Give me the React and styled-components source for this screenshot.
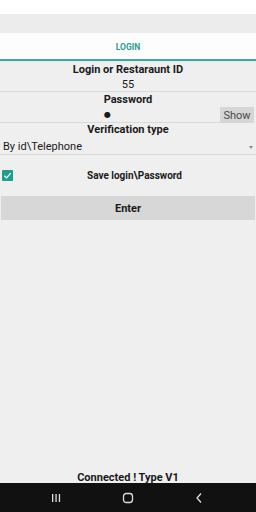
import React, { useState } from "react";
import styled, { createGlobalStyle } from "styled-components";

const GlobalStyle = createGlobalStyle`
  html, body {
    margin: 0;
    padding: 0;
    background: #efefef;
  }
  * {
    box-sizing: border-box;
  }
`;

const App = () => {
  // State for the login form
  const [login, setLogin] = useState("55");
  const [showPass, setShowPass] = useState(false);
  const [savePass, setSavePass] = useState(true);

  return (
    <Screen>
      <GlobalStyle />
      <StatusBar />
      <ActionBar />
      <TabBar>
        <Tab>LOGIN</Tab>
      </TabBar>
      <Form>
        <Label>Login or Restaraunt ID</Label>
        <Field value={login} onChange={(e) => setLogin(e.target.value)} />
        <Label>Password</Label>
        <PassRow>
          <Field $dot={!showPass} value={showPass ? "1" : "●"} readOnly />
          <ShowButton onClick={() => setShowPass(!showPass)}>Show</ShowButton>
        </PassRow>
        <Label $tight>Verification type</Label>
        <Spinner>
          <span>By id\Telephone</span>
          <Arrow />
        </Spinner>
        <CheckRow onClick={() => setSavePass(!savePass)}>
          <CheckBox $checked={savePass}>
            {savePass && (
              <svg width="9" height="9" viewBox="0 0 10 10">
                <path d="M1.5 5.2 L4 7.6 L8.6 2.4" stroke="#fff" strokeWidth="1.4" fill="none" />
              </svg>
            )}
          </CheckBox>
          <CheckLabel>Save login\Password</CheckLabel>
        </CheckRow>
        <EnterButton>Enter</EnterButton>
      </Form>
      <Footer>Connected ! Type V1</Footer>
      <NavBar>
        <svg width="12" height="10" viewBox="0 0 12 10">
          <rect x="2" y="1" width="1.3" height="8" fill="#ddd" />
          <rect x="5.4" y="1" width="1.3" height="8" fill="#ddd" />
          <rect x="8.8" y="1" width="1.3" height="8" fill="#ddd" />
        </svg>
        <svg width="12" height="12" viewBox="0 0 12 12">
          <rect x="1.5" y="1.5" width="9" height="9" rx="2.8" stroke="#ddd" strokeWidth="1.3" fill="none" />
        </svg>
        <svg width="12" height="12" viewBox="0 0 12 12">
          <path d="M8 1.5 L4 6 L8 10.5" stroke="#ddd" strokeWidth="1.3" fill="none" />
        </svg>
      </NavBar>
    </Screen>
  );
};

// Styled components
const Screen = styled.div`
  width: 256px;
  height: 512px;
  display: flex;
  flex-direction: column;
  background: #efefef;
  font-family: Roboto, "Liberation Sans", sans-serif;
  color: #1a1a1a;
  overflow: hidden;
`;

const StatusBar = styled.div`
  height: 14px;
  background: #ffffff;
`;

const ActionBar = styled.div`
  height: 19px;
  background: #ececec;
`;

const TabBar = styled.div`
  height: 29px;
  background: #fdfdfd;
  display: flex;
  border-bottom: 1px solid #e2ecea;
`;

const Tab = styled.div`
  flex: 1;
  display: flex;
  align-items: center;
  justify-content: center;
  font-size: 8.5px;
  font-weight: bold;
  color: #2a9d92;
  border-bottom: 2px solid #3aa89c;
  padding-top: 1px;
`;

const Form = styled.div`
  display: flex;
  flex-direction: column;
`;

const Label = styled.div`
  text-align: center;
  font-size: 11px;
  font-weight: bold;
  line-height: 14px;
  height: 14px;
  margin-top: ${(p) => (p.$tight ? "0" : "1px")};
`;

const Field = styled.input`
  flex: none;
  width: 100%;
  height: 15px;
  border: none;
  border-bottom: 1px solid #dadada;
  background: transparent;
  text-align: center;
  font-family: "DejaVu Sans", Roboto, sans-serif;
  font-family: ${(p) => (p.$dot ? "\"DejaVu Sans\", sans-serif" : "Roboto, \"Liberation Sans\", sans-serif")};
  font-size: ${(p) => (p.$dot ? "8px" : "11px")};
  color: #1a1a1a;
  padding: 0;
  outline: none;
`;

const PassRow = styled.div`
  display: flex;
  align-items: flex-end;
  height: 16px;
  padding-right: 2px;
  ${Field} {
    flex: 1;
    height: 16px;
    padding-right: 5px;
  }
`;

const ShowButton = styled.button`
  width: 34px;
  height: 16px;
  border: none;
  background: #d6d6d6;
  color: #4a4a4a;
  font-family: inherit;
  font-size: 11px;
  padding: 0;
`;

const Spinner = styled.div`
  display: flex;
  align-items: center;
  justify-content: space-between;
  height: 18px;
  padding: 1px 3px 0 3px;
  border-bottom: 1px solid #dadada;
  font-size: 11px;
  color: #1a1a1a;
`;

const Arrow = styled.div`
  width: 0;
  height: 0;
  margin-top: 3px;
  border-left: 2.5px solid transparent;
  border-right: 2.5px solid transparent;
  border-top: 3px solid #888;
`;

const CheckRow = styled.div`
  display: flex;
  align-items: center;
  height: 23px;
  margin-top: 9px;
  padding-left: 2px;
`;

const CheckBox = styled.div`
  width: 11px;
  height: 11px;
  border-radius: 1px;
  background: ${(p) => (p.$checked ? "#1f9e8e" : "transparent")};
  border: ${(p) => (p.$checked ? "none" : "1.5px solid #777")};
  display: flex;
  align-items: center;
  justify-content: center;
`;

const CheckLabel = styled.div`
  flex: 1;
  text-align: center;
  font-size: 10px;
  font-weight: bold;
`;

const EnterButton = styled.button`
  margin: 9px 1px 0 1px;
  height: 24px;
  border: none;
  background: #d7d7d7;
  color: #1a1a1a;
  font-family: inherit;
  font-size: 11px;
  font-weight: bold;
  padding: 0;
`;

const Footer = styled.div`
  margin-top: auto;
  text-align: center;
  font-size: 11px;
  font-weight: bold;
  line-height: 12px;
  padding-bottom: 0;
  margin-bottom: -1px;
`;

const NavBar = styled.div`
  height: 29px;
  background: #111111;
  display: flex;
  align-items: center;
  justify-content: space-between;
  padding: 0 51px 0 50px;
`;

export default App;
